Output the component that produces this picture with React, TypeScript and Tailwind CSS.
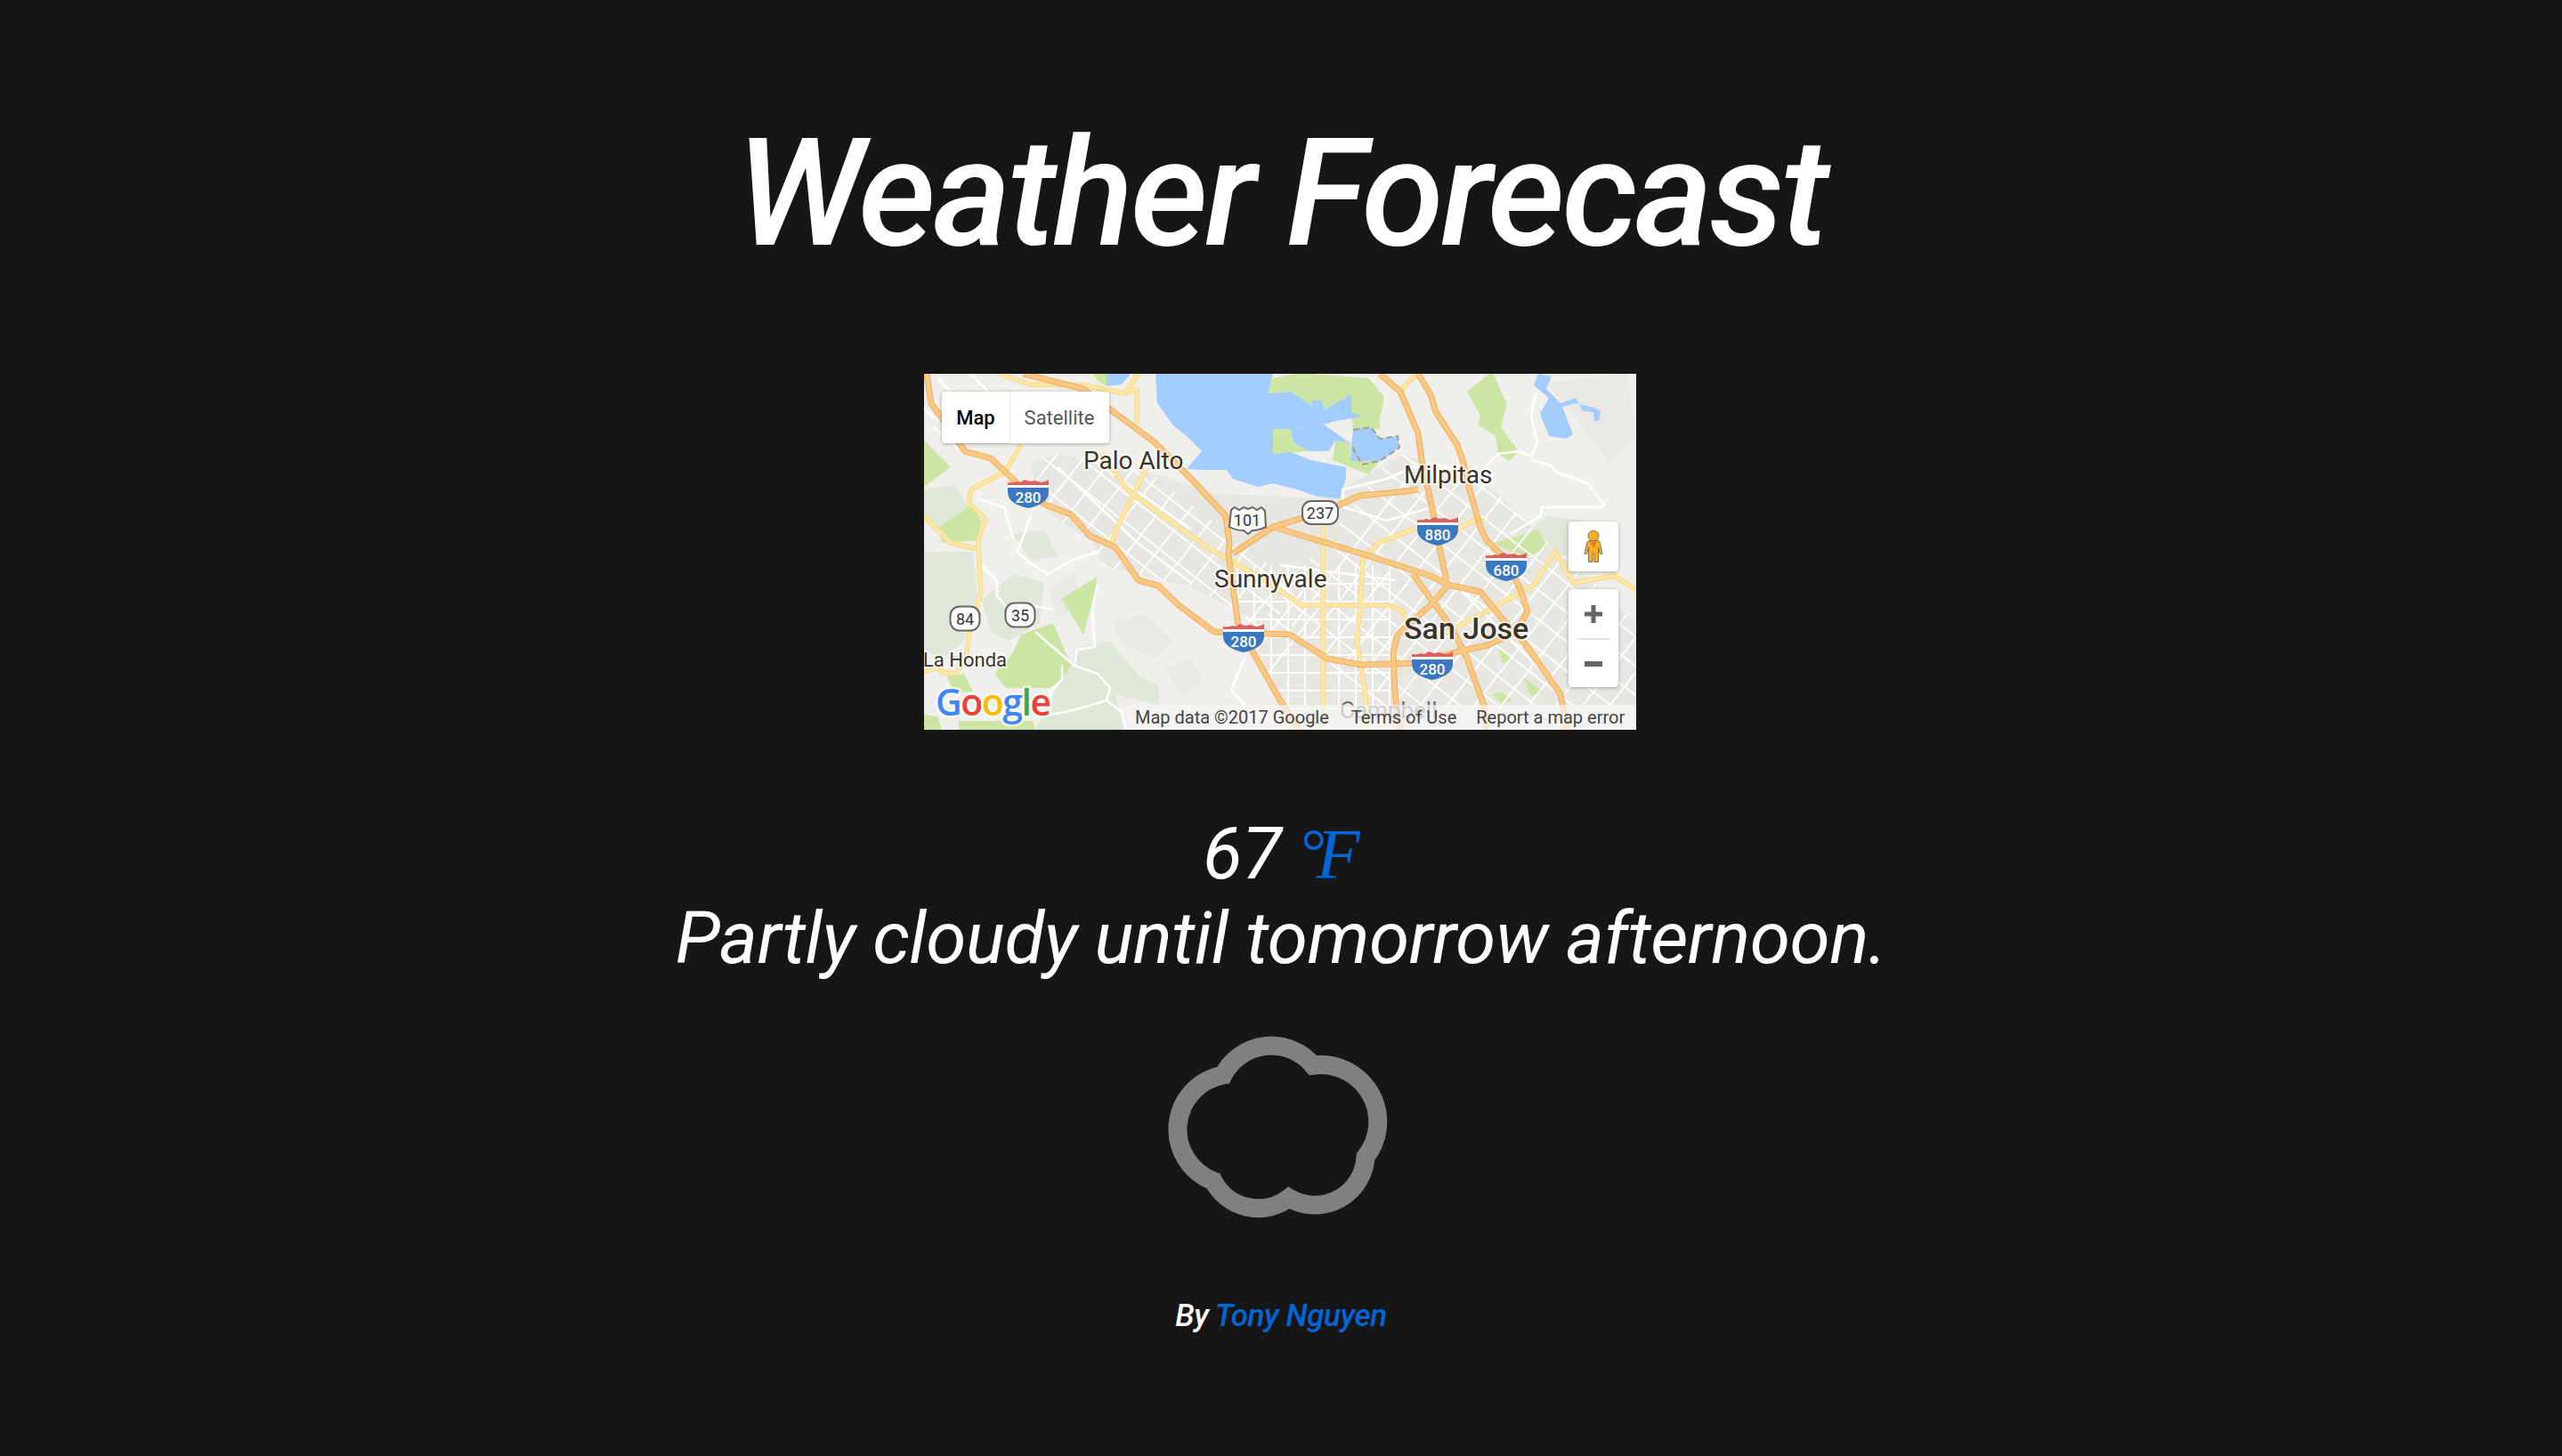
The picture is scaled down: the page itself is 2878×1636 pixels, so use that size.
import React from "react";

const water = [
  "260,0 392,0 386,22 412,20 437,37 435,30 447,30 450,40 480,23 480,43 492,48 462,53 449,57 412,62 392,62 392,90 412,88 435,97 474,105 474,117 467,140 442,138 419,130 392,123 375,127 347,118 340,108 315,108 295,107 312,87 295,70 279,57 262,33",
  "412,62 449,57 479,78 462,75 455,87 432,87 415,77",
  "482,63 502,60 512,73 532,70 534,83 512,98 479,98 480,80",
  "690,0 705,3 699,17 715,33 732,27 740,42 752,43 753,53 758,53 760,42 752,38 732,33 717,37 729,68 722,73 702,70 692,45 702,27 685,13",
  "205,0 232,0 222,12 205,14",
];

const green = [
  "392,5 416,0 435,0 500,5 517,27 512,50 512,62 482,63 480,43 480,23 450,40 447,30 435,30 437,37 412,20 386,22",
  "372,8 392,5 386,22 392,62 412,62 415,77 432,87 392,90 372,60",
  "462,75 479,78 479,98 512,98 499,113 459,97",
  "610,20 635,0 640,0 648,20 655,33 648,60 668,87 658,98 645,90 642,70 622,57 625,47",
  "0,75 30,105 0,127",
  "17,172 54,147 65,167 59,187 20,190",
  "155,253 194,228 192,245 179,293",
  "109,293 125,287 145,280 165,327 155,343 142,353 92,353 79,337 99,315",
  "39,390 122,390 125,400 39,400",
  "25,340 45,337 55,357 35,358",
  "0,383 15,385 20,400 0,400",
  "190,0 205,0 205,14 195,8",
  "640,190 690,175 700,195 680,205 660,200",
  "645,310 655,312 659,322 650,325",
  "672,340 695,357 682,362",
  "637,360 650,358 662,368 648,370",
];

const paleHills = [
  "172,308 208,300 242,340 264,350 264,372 215,360 225,400 125,400 155,343 165,327",
  "0,200 55,200 60,250 45,300 20,320 0,310",
  "65,255 100,225 135,235 130,280 95,300 75,290",
  "0,130 35,125 50,150 40,170 10,175 0,160",
  "650,200 700,160 740,165 750,195 700,210",
  "100,180 135,175 150,205 120,210",
];

const hillShade = [
  "210,280 250,270 280,300 260,320 225,305",
  "700,10 790,0 800,70 770,100 740,60",
  "50,30 90,60 70,80 40,60",
  "140,240 170,225 178,260 150,275",
  "270,330 300,320 315,345 290,362",
];

const urban = "150,90 250,110 330,135 450,140 540,90 590,110 640,130 680,170 800,280 800,372 550,380 430,400 400,370 360,270 300,240 200,215 190,190 130,150 120,100";

const highways = [
  "3,0 8,33 46,87 75,95 109,127 136,147 165,158 186,182 215,195 241,232 263,238 286,260 326,290 411,293 453,320 490,327 559,325 596,313 633,305 665,290 678,267 670,243 654,207 645,200 632,187 625,173 612,127 605,97 599,80 575,43 569,23 555,0",
  "512,0 535,20 555,67 559,97 572,157 580,200 587,233",
  "555,130 532,133 489,137 465,148 425,162 392,172 347,202",
  "112,0 179,17 209,40 259,77 302,120 339,160 343,190 342,203 353,283",
  "392,172 485,200 569,227 589,237 625,245 645,270 675,303 715,360 722,400",
  "589,237 572,257 532,293 527,313 529,360 535,400",
  "549,225 589,280 609,317 629,373 632,400",
  "368,310 400,367 421,400",
];

const arterials = [
  "83,0 120,12 181,13 225,22 239,17 239,57",
  "109,80 91,110 53,130 50,145 69,163 61,187 62,215 64,247 51,290 47,320 35,337 20,335 15,330 0,335",
  "0,160 30,190 61,197",
  "249,107 215,177 210,195",
  "199,90 231,133 321,197 374,227 424,260 522,260 538,267 545,285",
  "448,167 448,400",
  "493,207 490,260 486,300 496,360 497,400",
  "556,172 511,190 493,207",
  "575,297 632,267 685,237 709,200 730,235 775,227 800,243",
  "225,22 240,2 235,0",
  "535,20 545,8 555,0",
  "595,178 615,166 630,165",
];

const streets = [
  "59,210 82,233 82,250 97,267",
  "125,290 169,328 195,337 209,353 205,367 222,380 227,400",
  "195,237 192,250 189,267 192,307 172,310 169,327",
  "155,327 155,343 142,357 142,365 122,367",
  "119,213 139,225 165,210 195,200",
  "15,3 29,20",
  "0,40 17,53",
  "52,0 72,20",
  "687,23 682,47 689,77 682,93 669,87 645,90 632,103",
  "682,97 705,103 709,110 745,123 764,147 762,150 695,150 692,160 659,180",
  "97,267 119,260 145,265",
  "60,140 90,150 100,185",
  "10,60 40,85",
  "120,160 105,200 119,213",
  "205,367 160,380 125,385",
  "360,320 345,355 360,372",
  "590,105 560,100 520,118 470,130 472,150 520,165 570,150",
  "150,105 240,190 300,235",
  "180,90 300,175",
  "400,215 530,232",
  "600,240 700,340",
];

const cityGrid = [0, 1, 2, 3, 4, 5, 6, 7, 8, 9, 10, 11, 12, 13, 14, 15];

function Interstate({ x, y, num }: { x: number; y: number; num: string }) {
  return (
    <g transform={`translate(${x - 23} ${y - 16})`}>
      <path d="M0 6 L0 3 Q6 4 10 2 L14 3 L19 0 L25 2 L31 1 L37 3 Q42 3 46 0 L46 6 Z" fill="#dd5f5f" />
      <rect x="0" y="6" width="46" height="3" fill="#ffffff" />
      <path d="M0 9 H46 V14 Q46 27 23 32 Q0 27 0 14 Z" fill="#3b78c4" />
      <text x="23" y="26" textAnchor="middle" fontSize="17" fontWeight="500" fill="#ffffff">
        {num}
      </text>
    </g>
  );
}

function RoundShield({ x, y, w, h, num }: { x: number; y: number; w: number; h: number; num: string }) {
  return (
    <g>
      <rect x={x - w / 2} y={y - h / 2} width={w} height={h} rx={h / 2.6} fill="#ffffff" stroke="#666666" strokeWidth="2" />
      <text x={x} y={y + 6.5} textAnchor="middle" fontSize="18" fill="#333333">
        {num}
      </text>
    </g>
  );
}

function Label({ x, y, size, weight, children }: { x: number; y: number; size: number; weight?: number; children: string }) {
  return (
    <text
      x={x}
      y={y}
      fontSize={size}
      fontWeight={weight ?? 400}
      fill="#39342a"
      stroke="#ffffff"
      strokeOpacity="0.65"
      strokeWidth="4"
      paintOrder="stroke"
    >
      {children}
    </text>
  );
}

function MapPanel() {
  return (
    <div className="relative h-[400px] w-[800px] overflow-hidden bg-[#f0efeb] font-['Roboto',sans-serif] not-italic">
      <svg viewBox="0 0 800 400" className="block h-[400px] w-[800px]">
        <defs>
          <clipPath id="gridClip">
            <polygon points={urban} />
          </clipPath>
        </defs>

        {paleHills.map((p, i) => (
          <polygon key={i} points={p} fill="#dfe7d8" />
        ))}
        {hillShade.map((p, i) => (
          <polygon key={i} points={p} fill="#e9e8e3" />
        ))}
        <polygon points={urban} fill="#e8e6e1" />
        {green.map((p, i) => (
          <polygon key={i} points={p} fill="#cbe6a3" />
        ))}
        {water.map((p, i) => (
          <polygon key={i} points={p} fill="#a3ccff" />
        ))}
        <polyline
          points="482,63 502,60 512,73 532,70 534,83 512,98 492,102 480,80"
          fill="none"
          stroke="#a39d85"
          strokeWidth="2"
          strokeDasharray="7 4"
        />

        {/* street grids */}
        <g clipPath="url(#gridClip)" stroke="#ffffff" strokeWidth="1.8" fill="none">
          <g transform="rotate(38 240 150)">
            {cityGrid.map((i) => (
              <line key={i} x1={80 + i * 26} y1={110} x2={80 + i * 26} y2={220} />
            ))}
            {cityGrid.slice(0, 5).map((i) => (
              <line key={i} x1={60} y1={120 + i * 26} x2={440} y2={120 + i * 26} />
            ))}
          </g>
          <g>
            {cityGrid.slice(0, 10).map((i) => (
              <line key={i} x1={352 + i * 19} y1={215} x2={352 + i * 19} y2={375} />
            ))}
            {cityGrid.slice(0, 8).map((i) => (
              <line key={i} x1={345} y1={236 + i * 20} x2={525} y2={236 + i * 20} />
            ))}
          </g>
          <g transform="rotate(38 640 270)">
            {cityGrid.map((i) => (
              <line key={i} x1={470 + i * 24} y1={130} x2={470 + i * 24} y2={420} />
            ))}
            {cityGrid.slice(0, 12).map((i) => (
              <line key={i} x1={440} y1={140 + i * 26} x2={860} y2={140 + i * 26} />
            ))}
          </g>
        </g>
        {streets.map((p, i) => (
          <polyline key={i} points={p} fill="none" stroke="#ffffff" strokeWidth="2.5" strokeLinejoin="round" />
        ))}

        {/* arterials then highways */}
        {arterials.map((p, i) => (
          <polyline key={i} points={p} fill="none" stroke="#f6d98c" strokeWidth="5.5" strokeLinejoin="round" />
        ))}
        {arterials.map((p, i) => (
          <polyline key={i} points={p} fill="none" stroke="#fde7a4" strokeWidth="3.5" strokeLinejoin="round" />
        ))}
        {highways.map((p, i) => (
          <polyline key={i} points={p} fill="none" stroke="#f0b26a" strokeWidth="7" strokeLinejoin="round" />
        ))}
        {highways.map((p, i) => (
          <polyline key={i} points={p} fill="none" stroke="#f9c982" strokeWidth="4.5" strokeLinejoin="round" />
        ))}

        <Interstate x={117} y={135} num="280" />
        <Interstate x={359} y={297} num="280" />
        <Interstate x={571} y={328} num="280" />
        <Interstate x={577} y={177} num="880" />
        <Interstate x={654} y={217} num="680" />

        <path
          d="M345 153 L349 150 L354 153 L359 150 L364 152 L369 150 L374 153 L379 150 L383 154 L384 172 Q376 176 369 176 L364 180 L359 176 Q350 176 343 172 Z"
          fill="#ffffff"
          stroke="#666666"
          strokeWidth="2"
        />
        <text x="363" y="171" textAnchor="middle" fontSize="18" fill="#333333">
          101
        </text>
        <RoundShield x={445} y={156} w={40} h={26} num="237" />
        <RoundShield x={46} y={275} w={33} h={27} num="84" />
        <RoundShield x={108} y={271} w={33} h={27} num="35" />

        <Label x={179} y={107} size={28}>Palo Alto</Label>
        <Label x={539} y={123} size={28}>Milpitas</Label>
        <Label x={326} y={240} size={28}>Sunnyvale</Label>
        <Label x={539} y={298} size={34} weight={500}>San Jose</Label>
        <Label x={-1} y={329} size={22}>La Honda</Label>
        <text x="467" y="387" fontSize="26" fill="#6f6f6f">
          Campbell
        </text>

        {/* google logo */}
        <text
          x="13"
          y="384"
          fontSize="41"
          fontWeight="600"
          stroke="#ffffff"
          strokeOpacity="0.7"
          strokeWidth="5"
          paintOrder="stroke"
          fontFamily="Open Sans, sans-serif"
          letterSpacing="-1.5"
        >
          <tspan fill="#4285f4">G</tspan>
          <tspan fill="#ea4335">o</tspan>
          <tspan fill="#fbbc05">o</tspan>
          <tspan fill="#4285f4">g</tspan>
          <tspan fill="#34a853">l</tspan>
          <tspan fill="#ea4335">e</tspan>
        </text>
      </svg>

      {/* map type */}
      <div className="absolute left-5 top-5 flex h-[58px] w-[188px] items-center rounded bg-white text-[22px] shadow-[0_1px_4px_rgba(0,0,0,0.3)]">
        <div className="flex h-full w-[76px] items-center justify-center font-medium text-black shadow-[1px_0_2px_rgba(0,0,0,0.12)]">
          Map
        </div>
        <div className="flex-1 text-center text-[#565656]">Satellite</div>
      </div>

      {/* street view */}
      <div className="absolute left-[724px] top-[166px] flex h-14 w-14 items-center justify-center rounded bg-white shadow-[0_1px_4px_rgba(0,0,0,0.3)]">
        <svg width="22" height="38" viewBox="0 0 24 40">
          <circle cx="12" cy="7" r="6.5" fill="#fbb017" stroke="#6b6b6b" />
          <path
            d="M6 13 H18 Q20 14 21 20 L23 29 L20 29 L18 21 V39 H13 V29 H11 V39 H6 V21 L4 29 L1 29 L3 20 Q4 14 6 13 Z"
            fill="#fbb017"
            stroke="#6b6b6b"
          />
          <path d="M7 14 H17 L12 22 Z" fill="#e37e2b" />
        </svg>
      </div>

      {/* zoom */}
      <div className="absolute left-[724px] top-[242px] flex h-[110px] w-14 flex-col items-center rounded bg-white shadow-[0_1px_4px_rgba(0,0,0,0.3)]">
        <div className="flex h-[55px] w-full items-center justify-center">
          <svg width="20" height="20" viewBox="0 0 20 20">
            <path d="M7.5 0 H12.5 V7.5 H20 V12.5 H12.5 V20 H7.5 V12.5 H0 V7.5 H7.5 Z" fill="#666666" />
          </svg>
        </div>
        <div className="h-0.5 w-[38px] bg-[#e6e6e6]" />
        <div className="flex h-[53px] w-full items-center justify-center">
          <svg width="20" height="6" viewBox="0 0 20 6">
            <rect width="20" height="6" fill="#666666" />
          </svg>
        </div>
      </div>

      {/* attribution */}
      <div className="absolute bottom-0 right-0 flex h-7 w-[571px] items-center bg-[#f5f5f5]/70 pl-2 text-[20px] leading-none text-[#444444]">
        <span className="whitespace-nowrap">Map data ©2017 Google</span>
        <span className="ml-[25px] whitespace-nowrap">Terms of Use</span>
        <span className="ml-[22px] whitespace-nowrap">Report a map error</span>
      </div>
    </div>
  );
}

export default function App() {
  return (
    <main className="min-h-screen bg-[#161616] pt-[124px] text-center font-['Roboto',sans-serif] italic text-white">
      <h1 className="text-[168px] font-medium leading-[188px] tracking-[-3.6px]">Weather Forecast</h1>
      <div className="mt-[108px] flex justify-center pr-[2px]">
        <MapPanel />
      </div>
      <div className="mt-[92px] text-[82px] leading-[94px] tracking-[-0.5px]">
        <div>
          67{" "}
          <span className="font-['Liberation_Serif',serif] text-[80px] text-[#0366d6]">
            <span className="align-[6px] text-[72px] leading-none tracking-[-9px]">°</span>F
          </span>
        </div>
        <div>Partly cloudy until tomorrow afternoon.</div>
      </div>
      <div className="mt-[50px] flex justify-center">
        <svg width="296" height="230" viewBox="1 0 296 230">
          <path
            d="M84 57 A61 61 0 0 1 185 46 A64 64 0 0 1 244 149 A57 57 0 0 1 158 195 A57 57 0 0 1 73 176 A62 62 0 0 1 84 57 Z"
            fill="none"
            stroke="#808080"
            strokeWidth="21"
            strokeLinejoin="miter"
          />
        </svg>
      </div>
      <p className="mt-[72px] text-[35px] font-medium tracking-[-0.4px]">
        By <a className="text-[#0366d6]">Tony Nguyen</a>
      </p>
    </main>
  );
}
